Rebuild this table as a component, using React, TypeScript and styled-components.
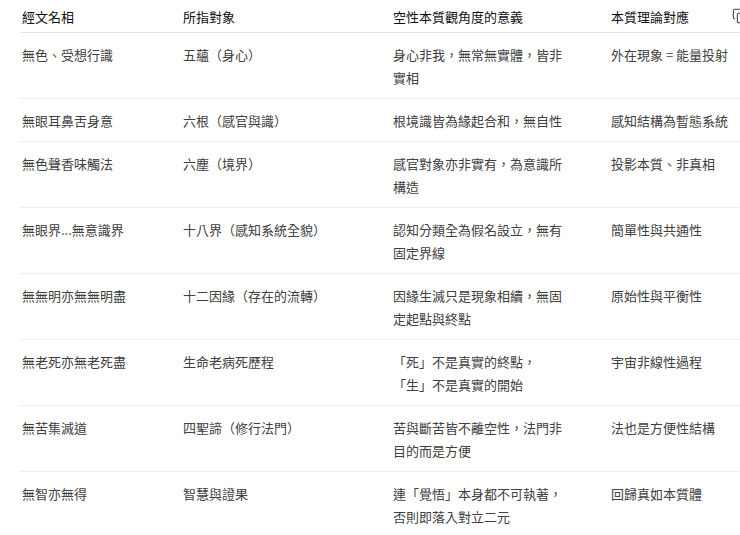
import React from 'react';
import styled, { createGlobalStyle } from 'styled-components';
import { Copy } from 'lucide-react';

const GlobalStyle = createGlobalStyle`
    html, body {
        margin: 0;
        padding: 0;
        background: #fff;
        overflow: hidden;
    }
    body {
        font-family: "Noto Sans CJK TC", "Noto Sans", sans-serif;
        text-spacing-trim: space-all;
    }
`;

const Page = styled.div`
    position: relative;
    width: 740px;
    height: 535px;
    overflow: hidden;
    padding-left: 20px;
    box-sizing: border-box;
`;

const Table = styled.table`
    border-collapse: collapse;
    table-layout: fixed;
    width: 840px;
    font-size: 13px;
    line-height: 23px;
    color: #404040;
    text-spacing-trim: space-all;
`;

const Col = styled.col<{ w: number }>`
    width: ${({ w }) => w}px;
`;

const Th = styled.th`
    text-align: left;
    font-weight: 400;
    color: #111;
    padding: 5px 16px 4px 2px;
    border-bottom: 1px solid #e3e3e3;
    white-space: nowrap;
`;

const Td = styled.td<{ wide?: boolean }>`
    vertical-align: top;
    padding: 10px ${({ wide }) => (wide ? '38px' : '16px')} 9px 2px;
    border-bottom: 1px solid #efefef;
`;

const CopyButton = styled.button`
    position: absolute;
    left: 732px;
    top: 8px;
    padding: 0;
    border: 0;
    background: none;
    color: #444;
    display: flex;
`;

const rows: [string, string, string, string][] = [
    ['無色、受想行識', '五蘊（身心）', '身心非我，無常無實體，皆非實相', '外在現象 = 能量投射'],
    ['無眼耳鼻舌身意', '六根（感官與識）', '根境識皆為緣起合和，無自性', '感知結構為暫態系統'],
    ['無色聲香味觸法', '六塵（境界）', '感官對象亦非實有，為意識所構造', '投影本質、非真相'],
    ['無眼界...無意識界', '十八界（感知系統全貌）', '認知分類全為假名設立，無有固定界線', '簡單性與共通性'],
    ['無無明亦無無明盡', '十二因緣（存在的流轉）', '因緣生滅只是現象相續，無固定起點與終點', '原始性與平衡性'],
    ['無老死亦無老死盡', '生命老病死歷程', '「死」不是真實的終點，「生」不是真實的開始', '宇宙非線性過程'],
    ['無苦集滅道', '四聖諦（修行法門）', '苦與斷苦皆不離空性，法門非目的而是方便', '法也是方便性結構'],
    ['無智亦無得', '智慧與證果', '連「覺悟」本身都不可執著，否則即落入對立二元', '回歸真如本質體'],
];

const App = () => (
    <>
        <GlobalStyle />
        <Page>
            <Table>
                <colgroup>
                    <Col w={161} />
                    <Col w={210} />
                    <Col w={218} />
                    <Col w={251} />
                </colgroup>
                <thead>
                    <tr>
                        <Th>經文名相</Th>
                        <Th>所指對象</Th>
                        <Th>空性本質觀角度的意義</Th>
                        <Th>本質理論對應</Th>
                    </tr>
                </thead>
                <tbody>
                    {rows.map((r) => (
                        <tr key={r[0]}>
                            <Td>{r[0]}</Td>
                            <Td>{r[1]}</Td>
                            <Td wide>{r[2]}</Td>
                            <Td>{r[3]}</Td>
                        </tr>
                    ))}
                </tbody>
            </Table>
            <CopyButton aria-label="copy">
                <Copy size={16} strokeWidth={1.6} />
            </CopyButton>
        </Page>
    </>
);

export default App;
